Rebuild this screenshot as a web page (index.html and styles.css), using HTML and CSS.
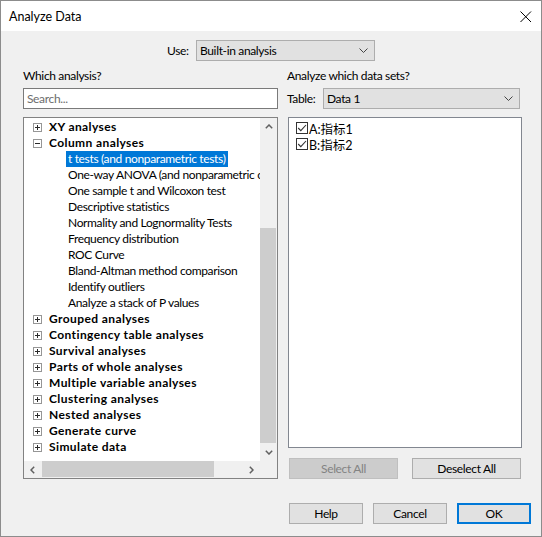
FILE: index.html
```html
<!DOCTYPE html>
<html>
<head>
<meta charset="utf-8">
<link rel="stylesheet" href="styles.css">
</head>
<body>
<div class="window">
  <div class="titlebar">
    <span class="title">Analyze Data</span>
    <span class="close"><svg width="12" height="12" viewBox="0 0 12 12"><path d="M0.5 0.5 L11 11 M11 0.5 L0.5 11" stroke="#000" stroke-width="1" fill="none"/></svg></span>
  </div>
  <div class="body">
    <div class="use-row">
      <span class="lbl use-lbl">Use:</span>
      <div class="select use-select"><span>Built-in analysis</span><svg class="chev" width="9" height="5" viewBox="0 0 9 5"><path d="M0.5 0.5 L4.5 4.5 L8.5 0.5" stroke="#444" stroke-width="1" fill="none"/></svg></div>
    </div>
    <div class="columns">
      <div class="col left">
        <div class="label">Which analysis?</div>
        <div class="search">Search...</div>
        <div class="tree">
          <div class="tree-view">
            <div class="row group"><span class="exp"><svg width="9" height="9" viewBox="0 0 9 9"><path d="M2 4.5 H7 M4.5 2 V7" stroke="#2a2a2a" stroke-width="1"/></svg></span><span class="gt">XY analyses</span></div>
            <div class="row group"><span class="exp"><svg width="9" height="9" viewBox="0 0 9 9"><path d="M2 4.5 H7" stroke="#2a2a2a" stroke-width="1"/></svg></span><span class="gt">Column analyses</span></div>
            <div class="row child"><span class="ct sel">t tests (and nonparametric tests)</span></div>
            <div class="row child"><span class="ct">One-way ANOVA (and nonparametric or mixed)</span></div>
            <div class="row child"><span class="ct">One sample t and Wilcoxon test</span></div>
            <div class="row child"><span class="ct">Descriptive statistics</span></div>
            <div class="row child"><span class="ct">Normality and Lognormality Tests</span></div>
            <div class="row child"><span class="ct">Frequency distribution</span></div>
            <div class="row child"><span class="ct">ROC Curve</span></div>
            <div class="row child"><span class="ct">Bland-Altman method comparison</span></div>
            <div class="row child"><span class="ct">Identify outliers</span></div>
            <div class="row child"><span class="ct">Analyze a stack of P values</span></div>
            <div class="row group"><span class="exp"><svg width="9" height="9" viewBox="0 0 9 9"><path d="M2 4.5 H7 M4.5 2 V7" stroke="#2a2a2a" stroke-width="1"/></svg></span><span class="gt">Grouped analyses</span></div>
            <div class="row group"><span class="exp"><svg width="9" height="9" viewBox="0 0 9 9"><path d="M2 4.5 H7 M4.5 2 V7" stroke="#2a2a2a" stroke-width="1"/></svg></span><span class="gt">Contingency table analyses</span></div>
            <div class="row group"><span class="exp"><svg width="9" height="9" viewBox="0 0 9 9"><path d="M2 4.5 H7 M4.5 2 V7" stroke="#2a2a2a" stroke-width="1"/></svg></span><span class="gt">Survival analyses</span></div>
            <div class="row group"><span class="exp"><svg width="9" height="9" viewBox="0 0 9 9"><path d="M2 4.5 H7 M4.5 2 V7" stroke="#2a2a2a" stroke-width="1"/></svg></span><span class="gt">Parts of whole analyses</span></div>
            <div class="row group"><span class="exp"><svg width="9" height="9" viewBox="0 0 9 9"><path d="M2 4.5 H7 M4.5 2 V7" stroke="#2a2a2a" stroke-width="1"/></svg></span><span class="gt">Multiple variable analyses</span></div>
            <div class="row group"><span class="exp"><svg width="9" height="9" viewBox="0 0 9 9"><path d="M2 4.5 H7 M4.5 2 V7" stroke="#2a2a2a" stroke-width="1"/></svg></span><span class="gt">Clustering analyses</span></div>
            <div class="row group"><span class="exp"><svg width="9" height="9" viewBox="0 0 9 9"><path d="M2 4.5 H7 M4.5 2 V7" stroke="#2a2a2a" stroke-width="1"/></svg></span><span class="gt">Nested analyses</span></div>
            <div class="row group"><span class="exp"><svg width="9" height="9" viewBox="0 0 9 9"><path d="M2 4.5 H7 M4.5 2 V7" stroke="#2a2a2a" stroke-width="1"/></svg></span><span class="gt">Generate curve</span></div>
            <div class="row group"><span class="exp"><svg width="9" height="9" viewBox="0 0 9 9"><path d="M2 4.5 H7 M4.5 2 V7" stroke="#2a2a2a" stroke-width="1"/></svg></span><span class="gt">Simulate data</span></div>
          </div>
          <div class="vscroll">
            <div class="sbtn"><svg width="8" height="5" viewBox="0 0 8 5"><path d="M0.8 4.2 L4 1 L7.2 4.2" stroke="#606060" stroke-width="1.5" fill="none"/></svg></div>
            <div class="vtrack"><div class="vthumb"></div></div>
            <div class="sbtn"><svg width="8" height="5" viewBox="0 0 8 5"><path d="M0.8 0.8 L4 4 L7.2 0.8" stroke="#606060" stroke-width="1.5" fill="none"/></svg></div>
          </div>
          <div class="hscroll">
            <div class="sbtn"><svg width="5" height="8" viewBox="0 0 5 8"><path d="M4.2 0.8 L1 4 L4.2 7.2" stroke="#606060" stroke-width="1.5" fill="none"/></svg></div>
            <div class="htrack"><div class="hthumb"></div></div>
            <div class="sbtn"><svg width="5" height="8" viewBox="0 0 5 8"><path d="M0.8 0.8 L4 4 L0.8 7.2" stroke="#606060" stroke-width="1.5" fill="none"/></svg></div>
          </div>
          <div class="corner"></div>
        </div>
      </div>
      <div class="col right">
        <div class="label">Analyze which data sets?</div>
        <div class="table-row">
          <span class="lbl">Table:</span>
          <div class="select table-select"><span>Data 1</span><svg class="chev" width="9" height="5" viewBox="0 0 9 5"><path d="M0.5 0.5 L4.5 4.5 L8.5 0.5" stroke="#444" stroke-width="1" fill="none"/></svg></div>
        </div>
        <div class="datalist">
          <div class="drow"><span class="cb"><svg width="12" height="12" viewBox="0 0 12 12"><path d="M2.2 6 L4.8 8.6 L10 3" stroke="#333" stroke-width="1.1" fill="none"/></svg></span><span class="dt">A:指标1</span></div>
          <div class="drow"><span class="cb"><svg width="12" height="12" viewBox="0 0 12 12"><path d="M2.2 6 L4.8 8.6 L10 3" stroke="#333" stroke-width="1.1" fill="none"/></svg></span><span class="dt">B:指标2</span></div>
        </div>
        <div class="btn-row">
          <button class="btn disabled" disabled>Select All</button>
          <button class="btn">Deselect All</button>
        </div>
      </div>
    </div>
    <div class="footer">
      <button class="btn fbtn">Help</button>
      <button class="btn fbtn">Cancel</button>
      <button class="btn fbtn default">OK</button>
    </div>
  </div>
</div>
</body>
</html>
```
FILE: styles.css
```css
* { box-sizing: border-box; }
html, body { margin: 0; padding: 0; }
body {
  font-family: "Lato", "Liberation Sans", "Noto Sans CJK SC", sans-serif;
  font-size: 12px;
  letter-spacing: -0.35px;
  color: #000;
  background: #fff;
}
.window {
  width: 542px;
  height: 537px;
  border: 1px solid #8c8c8c;
  display: flex;
  flex-direction: column;
  background: #f0f0f0;
}
.titlebar {
  height: 30px;
  flex: none;
  background: #fff;
  display: flex;
  align-items: center;
  justify-content: space-between;
  padding: 0 9px 0 8px;
}
.title { font-size: 12.5px; line-height: 16px; padding-top: 1px; letter-spacing: 0; }
.close { display: flex; width: 12px; height: 12px; margin-top: 1px; }
.body {
  flex: 1;
  display: flex;
  flex-direction: column;
  padding: 9px 19px 0 22px;
}
.use-row {
  display: flex;
  align-items: center;
  padding-left: 144px;
}
.lbl { line-height: 15px; }
.use-lbl { width: 29px; flex: none; }
.select {
  height: 21px;
  background: #e1e1e1;
  border: 1px solid #adadad;
  display: flex;
  align-items: center;
  justify-content: space-between;
  padding: 0 6px 0 3px;
}
.use-select { width: 179px; }
.columns {
  display: flex;
  gap: 9px;
  margin-top: 7px;
}
.col { display: flex; flex-direction: column; }
.left { width: 255px; }
.right { width: 235px; }
.label { line-height: 15px; height: 15px; }
.search {
  margin-top: 5px;
  height: 21px;
  background: #fff;
  border: 1px solid #7a7a7a;
  color: #6d6d6d;
  padding: 0 3px;
  line-height: 19px;
}
.tree {
  margin-top: 8px;
  height: 362px;
  border: 1px solid #828282;
  background: #fff;
  display: grid;
  grid-template-columns: 236px 17px;
  grid-template-rows: 343px 17px;
}
.tree-view {
  overflow: hidden;
  padding-top: 1px;
  background: #fff;
}
.row {
  height: 16px;
  display: flex;
  align-items: center;
  white-space: nowrap;
}
.group { padding-left: 9px; }
.exp {
  width: 9px;
  height: 9px;
  border: 1px solid #969696;
  flex: none;
  position: relative;
}
.exp svg { position: absolute; left: -1px; top: -1px; }
.gt { font-weight: bold; margin-left: 7px; line-height: 16px; letter-spacing: 0.4px; }
.child { padding-left: 42px; }
.ct { padding: 0 2px; line-height: 16px; height: 16px; }
.ct.sel { background: #0078d7; color: #fff; }
.vscroll {
  background: #f0f0f0;
  display: flex;
  flex-direction: column;
}
.sbtn {
  width: 17px;
  height: 17px;
  flex: none;
  display: flex;
  align-items: center;
  justify-content: center;
}
.vtrack { flex: 1; display: flex; flex-direction: column; }
.vthumb {
  margin: 93px 1px 0 0;
  height: 215px;
  background: #cdcdcd;
}
.hscroll {
  background: #f0f0f0;
  display: flex;
}
.htrack { flex: 1; display: flex; }
.hthumb {
  margin: 0 0 1px 1px;
  width: 172px;
  background: #cdcdcd;
}
.corner { background: #f0f0f0; }
.table-row {
  margin-top: 5px;
  display: flex;
  align-items: center;
}
.table-select { width: 197px; margin-left: auto; margin-right: 2px; }
.datalist {
  margin-top: 8px;
  margin-left: 1px;
  height: 331px;
  background: #fff;
  border: 1px solid #828790;
  padding: 2px 0 0 7px;
}
.drow { height: 16px; display: flex; align-items: center; }
.cb {
  width: 12px;
  height: 12px;
  border: 1px solid #333;
  background: #fff;
  position: relative;
  flex: none;
}
.cb svg { position: absolute; left: -1px; top: -1px; }
.dt { margin-left: 1px; font-size: 12.5px; letter-spacing: 0; }
.btn-row {
  margin-top: 10px;
  display: flex;
  justify-content: space-between;
  padding: 0 1px 0 2px;
}
.btn {
  font-family: inherit;
  font-size: 12px;
  letter-spacing: -0.35px;
  height: 21px;
  width: 109px;
  background: #e1e1e1;
  border: 1px solid #adadad;
  color: #000;
  padding: 0;
  margin: 0;
}
.btn.disabled {
  background: #cccccc;
  border-color: #bfbfbf;
  color: #838383;
}
.footer {
  margin-top: 24px;
  display: flex;
  justify-content: flex-end;
  gap: 10px;
  margin-right: -9px;
}
.fbtn { width: 74px; }
.fbtn.default { border: 2px solid #0078d7; }
```
